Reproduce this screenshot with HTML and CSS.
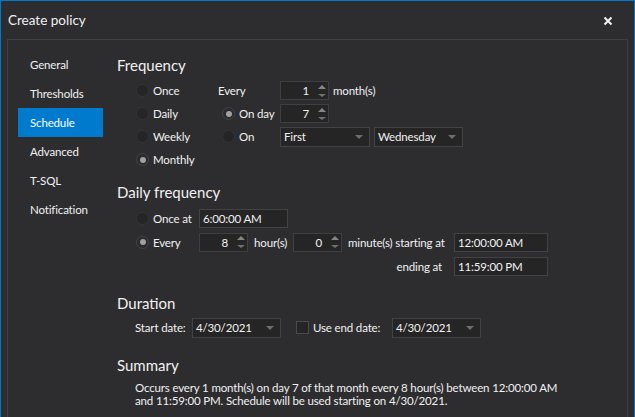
FILE: index.html
```html
<!DOCTYPE html>
<html>
<head>
<meta charset="utf-8">
<link rel="stylesheet" href="styles.css">
</head>
<body>
<div class="window">
  <div class="titlebar">
    <span class="title">Create policy</span>
    <span class="close"><svg width="10" height="10" viewBox="0 0 10 10"><path d="M1.5 1.5 L8.5 8.5 M8.5 1.5 L1.5 8.5" stroke="#f1f1f1" stroke-width="2" fill="none"/></svg></span>
  </div>
  <div class="panel">
    <nav class="nav">
      <div class="nav-item">General</div>
      <div class="nav-item">Thresholds</div>
      <div class="nav-item active">Schedule</div>
      <div class="nav-item">Advanced</div>
      <div class="nav-item">T-SQL</div>
      <div class="nav-item">Notification</div>
    </nav>
    <main class="content">
      <section class="sec-freq">
        <h2 class="heading">Frequency</h2>
        <div class="freq-body">
          <div class="radio-col">
            <div class="row"><span class="radio"></span><span>Once</span></div>
            <div class="row"><span class="radio"></span><span>Daily</span></div>
            <div class="row"><span class="radio"></span><span>Weekly</span></div>
            <div class="row"><span class="radio checked"></span><span>Monthly</span></div>
          </div>
          <div class="monthly">
            <div class="m-label">Every</div>
            <div class="spin"><span class="val">1</span><span class="arrows"><i class="up"></i><i class="down"></i></span></div>
            <div class="after">month(s)</div>
            <div class="m-label indent"><span class="radio checked"></span><span>On day</span></div>
            <div class="spin"><span class="val">7</span><span class="arrows"><i class="up"></i><i class="down"></i></span></div>
            <div></div>
            <div class="m-label indent"><span class="radio"></span><span>On</span></div>
            <div class="combos">
              <div class="combo w90"><span>First</span><i class="caret"></i></div>
              <div class="combo w89"><span>Wednesday</span><i class="caret"></i></div>
            </div>
          </div>
        </div>
      </section>

      <section class="sec-daily">
        <h2 class="heading">Daily frequency</h2>
        <div class="daily-grid">
          <div class="row"><span class="radio"></span><span>Once at</span></div>
          <div class="text-box w89">6:00:00 AM</div>
          <div></div><div></div><div></div><div></div>

          <div class="row"><span class="radio checked"></span><span>Every</span></div>
          <div class="spin"><span class="val">8</span><span class="arrows"><i class="up"></i><i class="down"></i></span></div>
          <div class="unit">hour(s)</div>
          <div class="spin"><span class="val">0</span><span class="arrows"><i class="up"></i><i class="down"></i></span></div>
          <div class="unit">minute(s) starting at</div>
          <div class="text-box w94">12:00:00 AM</div>

          <div></div><div></div><div></div><div></div>
          <div class="unit right">ending at</div>
          <div class="text-box w94">11:59:00 PM</div>
        </div>
      </section>

      <section class="sec-duration">
        <h2 class="heading">Duration</h2>
        <div class="dur-row">
          <span class="dur-label">Start date:</span>
          <div class="combo w89"><span>4/30/2021</span><i class="caret"></i></div>
          <span class="checkbox"></span>
          <span class="dur-label2">Use end date:</span>
          <div class="combo w89"><span>4/30/2021</span><i class="caret"></i></div>
        </div>
      </section>

      <section class="sec-summary">
        <h2 class="heading">Summary</h2>
        <p class="summary">Occurs every 1 month(s) on day 7 of that month every 8 hour(s) between 12:00:00 AM<br>and 11:59:00 PM. Schedule will be used starting on 4/30/2021.</p>
      </section>
    </main>
  </div>
</div>
</body>
</html>
```

FILE: styles.css
```css
* { box-sizing: border-box; }

html, body {
  margin: 0;
  padding: 0;
  background: #2d2d30;
}

body {
  font-family: Lato, "Noto Sans", sans-serif;
  font-size: 11.5px;
  letter-spacing: -0.15px;
  color: #f1f1f1;
}

.window {
  width: 635px;
  height: 417px;
  border: 1px solid #007acc;
  border-bottom: none;
  overflow: hidden;
  display: flex;
  flex-direction: column;
}

.titlebar {
  height: 38px;
  flex: none;
  display: flex;
  align-items: center;
  justify-content: space-between;
  padding: 0 21px 0 7px;
}

.title {
  font-size: 13.5px;
  letter-spacing: 0;
  color: #f1f1f1;
}

.close {
  display: flex;
  width: 10px;
  height: 10px;
  margin-top: 1px;
}

.panel {
  flex: 1;
  margin: 0 6px;
  border: 1px solid #3f3f46;
  border-bottom: none;
  display: flex;
  padding: 10px 10px 0 10px;
}

.nav {
  width: 85px;
  flex: none;
}

.nav-item {
  height: 29px;
  line-height: 29px;
  padding-left: 12px;
  color: #f1f1f1;
}

.nav-item.active {
  background: #007acc;
  color: #ffffff;
}

.content {
  margin-left: 14px;
  padding-top: 5px;
  flex: 1;
}

.heading {
  margin: 0;
  font-size: 15px;
  letter-spacing: 0;
  font-weight: normal;
  line-height: 20px;
  height: 20px;
  color: #f1f1f1;
}

.row {
  display: flex;
  align-items: center;
}

.radio {
  width: 13px;
  height: 13px;
  border-radius: 50%;
  background: #252527;
  border: 1px solid #343437;
  flex: none;
  margin-right: 4px;
  position: relative;
}

.radio.checked {
  border-color: #444447;
  background: #2b2b2d;
}

.radio.checked::after {
  content: "";
  position: absolute;
  left: 2.5px;
  top: 2.5px;
  width: 6px;
  height: 6px;
  border-radius: 50%;
  background: #a0a0a0;
}

/* Frequency */
.freq-body {
  display: flex;
  margin-top: 4px;
}

.radio-col {
  margin-left: 19px;
  width: 82px;
}

.radio-col .row {
  height: 23px;
}

.monthly {
  display: grid;
  grid-template-columns: 62px 49px auto;
  grid-auto-rows: 23px;
  align-items: center;
  align-content: start;
}

.m-label {
  display: flex;
  align-items: center;
}

.m-label.indent {
  padding-left: 4px;
}

.after {
  padding-left: 4px;
}

.combos {
  grid-column: 2 / 4;
  display: flex;
  gap: 4px;
}

.spin {
  width: 49px;
  height: 19px;
  background: #252526;
  border: 1px solid #3f3f42;
  display: flex;
  align-items: center;
  justify-content: flex-end;
}

.spin .val {
  padding-right: 6px;
}

.arrows {
  width: 13px;
  height: 17px;
  display: flex;
  flex-direction: column;
  align-items: center;
  justify-content: center;
  gap: 5px;
}

.arrows i {
  display: block;
  width: 0;
  height: 0;
  border-left: 4px solid transparent;
  border-right: 4px solid transparent;
}

.arrows .up { border-bottom: 4px solid #858585; }
.arrows .down { border-top: 3px solid #707070; }

.combo {
  height: 20px;
  background: #252526;
  border: 1px solid #434346;
  display: flex;
  align-items: center;
  justify-content: space-between;
  padding: 0 6px 0 3px;
}

.caret {
  display: block;
  width: 0;
  height: 0;
  border-left: 4px solid transparent;
  border-right: 4px solid transparent;
  border-top: 4px solid #6e6e6e;
}

.w89 { width: 89px; }
.w90 { width: 90px; }
.w94 { width: 94px; }

/* Daily */
.sec-daily {
  margin-top: 11px;
}

.daily-grid {
  margin-top: 4px;
  margin-left: 19px;
  display: grid;
  grid-template-columns: 63px 49px 45px 49px 112px 94px;
  grid-auto-rows: 24px;
  align-items: center;
}

.text-box {
  height: 19px;
  background: #252526;
  border: 1px solid #434346;
  padding-left: 3px;
  line-height: 17px;
}

.unit {
  padding-left: 6px;
  white-space: nowrap;
}

.unit.right {
  text-align: right;
  padding-right: 12px;
}

/* Duration */
.sec-duration {
  margin-top: 15px;
}

.dur-row {
  margin-top: 3px;
  height: 23px;
  display: flex;
  align-items: center;
  padding-left: 18px;
}

.dur-label {
  width: 57px;
  white-space: nowrap;
}

.checkbox {
  width: 13px;
  height: 13px;
  border: 1px solid #4a4a4d;
  background: #252526;
  margin-left: 15px;
  margin-right: 4px;
}

.dur-label2 {
  width: 79px;
  white-space: nowrap;
}

/* Summary */
.sec-summary {
  margin-top: 16px;
}

.summary {
  margin: 6px 0 0 18px;
  line-height: 13px;
}
```
